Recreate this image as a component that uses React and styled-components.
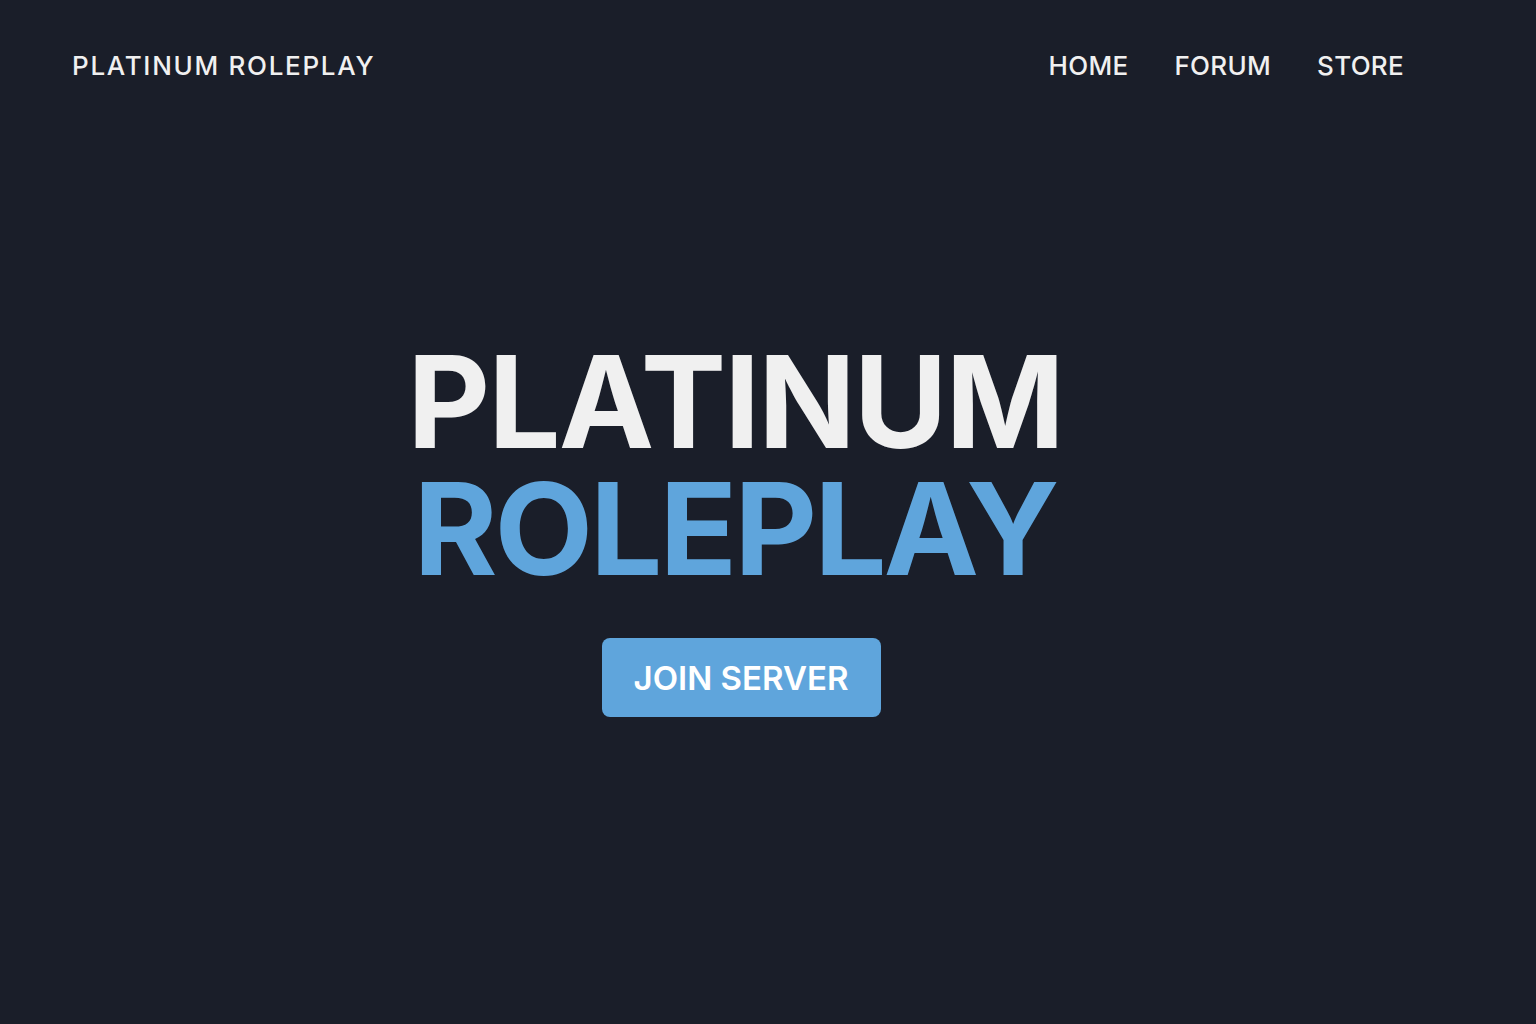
import React from "react"
import styled, { createGlobalStyle } from "styled-components"

const GlobalStyle = createGlobalStyle`
  html, body {
    margin: 0;
    padding: 0;
    background: #1a1e29;
  }
  body {
    font-family: Inter, "Noto Sans", Roboto, sans-serif;
    color: #f0f0f0;
  }
`

const Page = styled.div`
  min-height: 1024px;
  background: #1a1e29;
  display: flex;
  flex-direction: column;
`

const Header = styled.header`
  display: flex;
  justify-content: space-between;
  align-items: center;
  padding: 46px 132px 0 72px;
  height: 38px;
`

const Brand = styled.a`
  font-size: 26px;
  font-weight: 500;
  letter-spacing: 1.7px;
  color: #f0f0f0;
  text-decoration: none;
`

const Nav = styled.nav`
  display: flex;
  gap: 46px;
`

const NavLink = styled.a`
  font-size: 26px;
  font-weight: 500;
  letter-spacing: 0.3px;
  color: #f0f0f0;
  text-decoration: none;
`

const Hero = styled.main`
  display: flex;
  flex-direction: column;
  align-items: center;
  padding: 254px 66px 0 0;
`

const Title = styled.h1`
  margin: 0;
  font-size: 128px;
  font-weight: 700;
  line-height: 127px;
  text-align: center;
`

const Line = styled.span`
  display: block;
  letter-spacing: ${p => (p.$accent ? "-3px" : "-2px")};
  color: ${p => (p.$accent ? "#5fa5dc" : "#f0f0f0")};
`

const JoinButton = styled.button`
  margin: 46px 0 0 12px;
  width: 279px;
  height: 79px;
  border: none;
  border-radius: 8px;
  background: #5fa5dc;
  color: #fff;
  font-family: inherit;
  font-size: 33px;
  font-weight: 600;
  cursor: pointer;
`

export default function App() {
  return (
    <Page>
      <GlobalStyle />
      <Header>
        <Brand href="#">PLATINUM ROLEPLAY</Brand>
        <Nav>
          <NavLink href="#">HOME</NavLink>
          <NavLink href="#">FORUM</NavLink>
          <NavLink href="#">STORE</NavLink>
        </Nav>
      </Header>
      <Hero>
        <Title>
          <Line>PLATINUM</Line>
          <Line $accent>ROLEPLAY</Line>
        </Title>
        <JoinButton>JOIN SERVER</JoinButton>
      </Hero>
    </Page>
  )
}
